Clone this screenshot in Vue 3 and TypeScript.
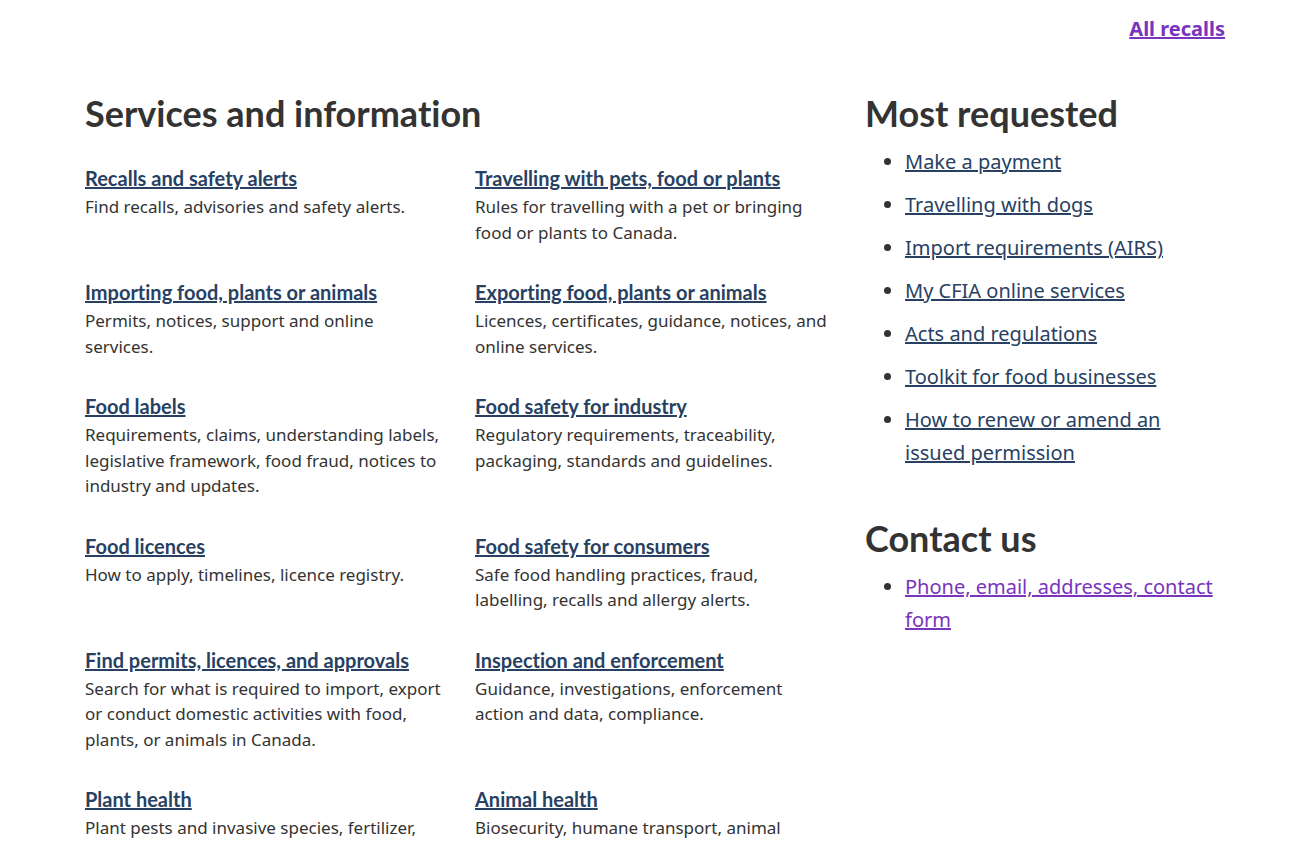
<script setup lang="ts">
interface Topic {
  title: string
  text: string
}

const topics: Topic[] = [
  { title: 'Recalls and safety alerts', text: 'Find recalls, advisories and safety alerts.' },
  { title: 'Travelling with pets, food or plants', text: 'Rules for travelling with a pet or bringing food or plants to Canada.' },
  { title: 'Importing food, plants or animals', text: 'Permits, notices, support and online services.' },
  { title: 'Exporting food, plants or animals', text: 'Licences, certificates, guidance, notices, and online services.' },
  { title: 'Food labels', text: 'Requirements, claims, understanding labels, legislative framework, food fraud, notices to industry and updates.' },
  { title: 'Food safety for industry', text: 'Regulatory requirements, traceability, packaging, standards and guidelines.' },
  { title: 'Food licences', text: 'How to apply, timelines, licence registry.' },
  { title: 'Food safety for consumers', text: 'Safe food handling practices, fraud, labelling, recalls and allergy alerts.' },
  { title: 'Find permits, licences, and approvals', text: 'Search for what is required to import, export or conduct domestic activities with food, plants, or animals in Canada.' },
  { title: 'Inspection and enforcement', text: 'Guidance, investigations, enforcement action and data, compliance.' },
  { title: 'Plant health', text: 'Plant pests and invasive species, fertilizer,' },
  { title: 'Animal health', text: 'Biosecurity, humane transport, animal' },
]

const requested: string[] = [
  'Make a payment',
  'Travelling with dogs',
  'Import requirements (AIRS)',
  'My CFIA online services',
  'Acts and regulations',
  'Toolkit for food businesses',
  'How to renew or amend an issued permission',
]
</script>

<template>
  <div class="page">
    <p class="recalls"><a class="visited" href="#">All recalls</a></p>
    <div class="columns">
      <main class="services">
        <h2>Services and information</h2>
        <div class="topics">
          <section v-for="topic in topics" :key="topic.title" class="topic">
            <h3><a href="#">{{ topic.title }}</a></h3>
            <p>{{ topic.text }}</p>
          </section>
        </div>
      </main>
      <aside class="side">
        <section>
          <h2>Most requested</h2>
          <ul>
            <li v-for="item in requested" :key="item"><a href="#">{{ item }}</a></li>
          </ul>
        </section>
        <section class="contact">
          <h2>Contact us</h2>
          <ul>
            <li><a class="visited" href="#">Phone, email, addresses, contact form</a></li>
          </ul>
        </section>
      </aside>
    </div>
  </div>
</template>

<style>
body {
  margin: 0;
  background: #fff;
}
html {
  overflow: hidden;
}
</style>

<style scoped>
.page {
  padding: 12px 72px 0 85px;
  color: #333;
  font: 20px/33px "Noto Sans", sans-serif;
}
a {
  color: #284162;
  text-decoration: underline;
  text-decoration-thickness: 2px;
}
a.visited {
  color: #7834bc;
}
.recalls {
  margin: 0 0 48px;
  text-align: right;
  font-weight: 700;
}
.columns {
  display: grid;
  grid-template-columns: repeat(3, 1fr);
  column-gap: 30px;
}
.services {
  grid-column: span 2;
}
h2 {
  margin: 0;
  font: 700 36px/40px Lato, sans-serif;
  font-variant-ligatures: none;
}
.topics {
  display: grid;
  grid-template-columns: 1fr 1fr;
  column-gap: 30px;
  row-gap: 33px;
  padding-top: 31px;
}
h3 {
  margin: 0 0 2px;
  font: 700 20px/28px Lato, sans-serif;
  font-variant-ligatures: none;
}
.topic p {
  margin: 0;
  font-size: 17px;
  line-height: 1.5;
}
ul {
  margin: 12px 0 0;
  padding: 0 0 0 40px;
}
li {
  margin-bottom: 10px;
}
.contact {
  margin-top: 49px;
}
</style>
